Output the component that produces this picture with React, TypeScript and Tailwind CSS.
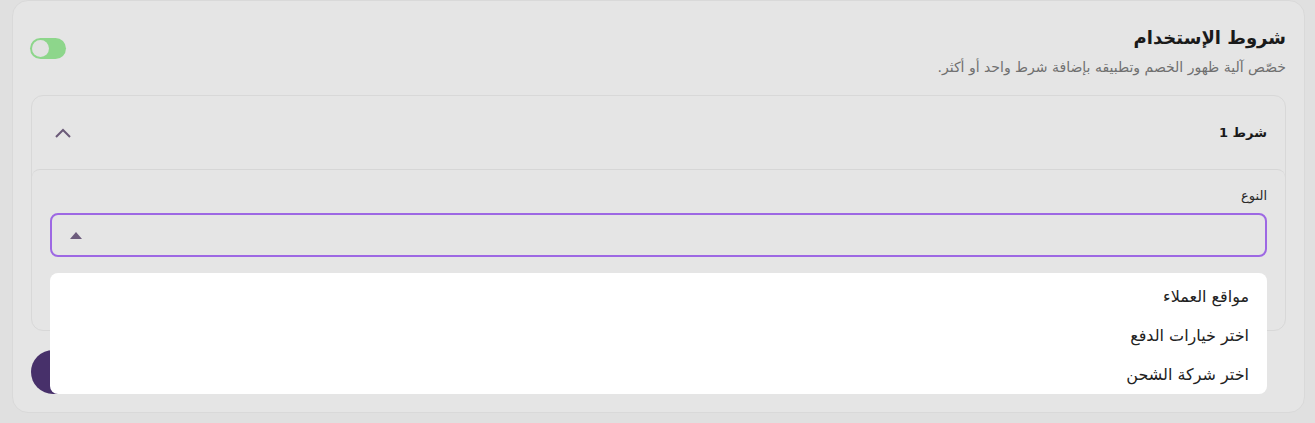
import React, { useState } from 'react';

const options = ['مواقع العملاء', 'اختر خيارات الدفع', 'اختر شركة الشحن'];

export default function App() {
  const [enabled, setEnabled] = useState(true);
  const [open, setOpen] = useState(true);

  return (
    <div
      className="min-h-[423px] bg-[#e0e0e0] pl-[12px] pr-[10px]"
      style={{ fontFamily: '"DejaVu Sans", "Noto Sans", sans-serif' }}
    >
      <div
        dir="rtl"
        className="relative rounded-2xl border border-[#d9d9d9] bg-[#e5e5e5] px-[18px] pb-[18px] pt-[23px]"
      >
        {/* Header */}
        <div className="flex items-start justify-between">
          <div className="space-y-[5px]">
            <h2 className="text-[18px] font-bold leading-[28px] text-[#1a1a1a]">شروط الإستخدام</h2>
            <p className="text-[14px] leading-[20px] text-[#707070]">
              خصّص آلية ظهور الخصم وتطبيقه بإضافة شرط واحد أو أكثر.
            </p>
          </div>
          <button
            dir="ltr"
            onClick={() => setEnabled(!enabled)}
            className={`-ml-[1px] mt-[14px] flex h-[21px] w-[36px] items-center rounded-full px-[2px] ${enabled ? 'bg-[#8dd68b]' : 'bg-[#bdbdbd]'}`}
          >
            <span className="h-[17px] w-[17px] rounded-full bg-[#e2e2e2]" />
          </button>
        </div>

        {/* Condition accordion */}
        <div className="mt-[18px] rounded-xl border border-[#d8d8d8] bg-[#e5e5e5]">
          <div className="flex h-[73px] items-center justify-between pl-[23px] pr-[18px]">
            <span className="text-[13px] font-bold text-[#1a1a1a]">شرط 1</span>
            <svg width="16" height="10" viewBox="0 0 16 10" fill="none">
              <polyline points="1,9 8,2 15,9" stroke="#6b5a78" strokeWidth="2" />
            </svg>
          </div>
          <div className="relative rounded-t-lg border-t border-[#d6d6d6] px-[18px] pb-[73px] pt-[16px]">
            <label className="block text-[13px] leading-[20px] text-[#2a2a2a]">النوع</label>
            <button
              onClick={() => setOpen(!open)}
              className="mt-[7px] flex h-[44px] w-full items-center justify-end rounded-lg border-2 border-[#9d68e3] pl-[18px]"
            >
              <svg width="12" height="7" viewBox="0 0 12 7">
                <polygon points="0,7 6,0 12,7" fill="#6d5c7d" />
              </svg>
            </button>
            {open && (
              <ul className="absolute left-[18px] right-[18px] top-[103px] z-10 rounded-lg bg-white pt-[4px]">
                {options.map((o) => (
                  <li key={o} className="flex h-[39px] items-center pr-[18px] text-[16px] text-[#222222]">
                    {o}
                  </li>
                ))}
              </ul>
            )}
          </div>
        </div>

        {/* Add condition */}
        <div className="mt-[19px] flex justify-end">
          <button className="h-[44px] w-[170px] rounded-full bg-[#47306a] text-[14px] font-bold text-white">
            إضافة شرط
          </button>
        </div>
      </div>
    </div>
  );
}
